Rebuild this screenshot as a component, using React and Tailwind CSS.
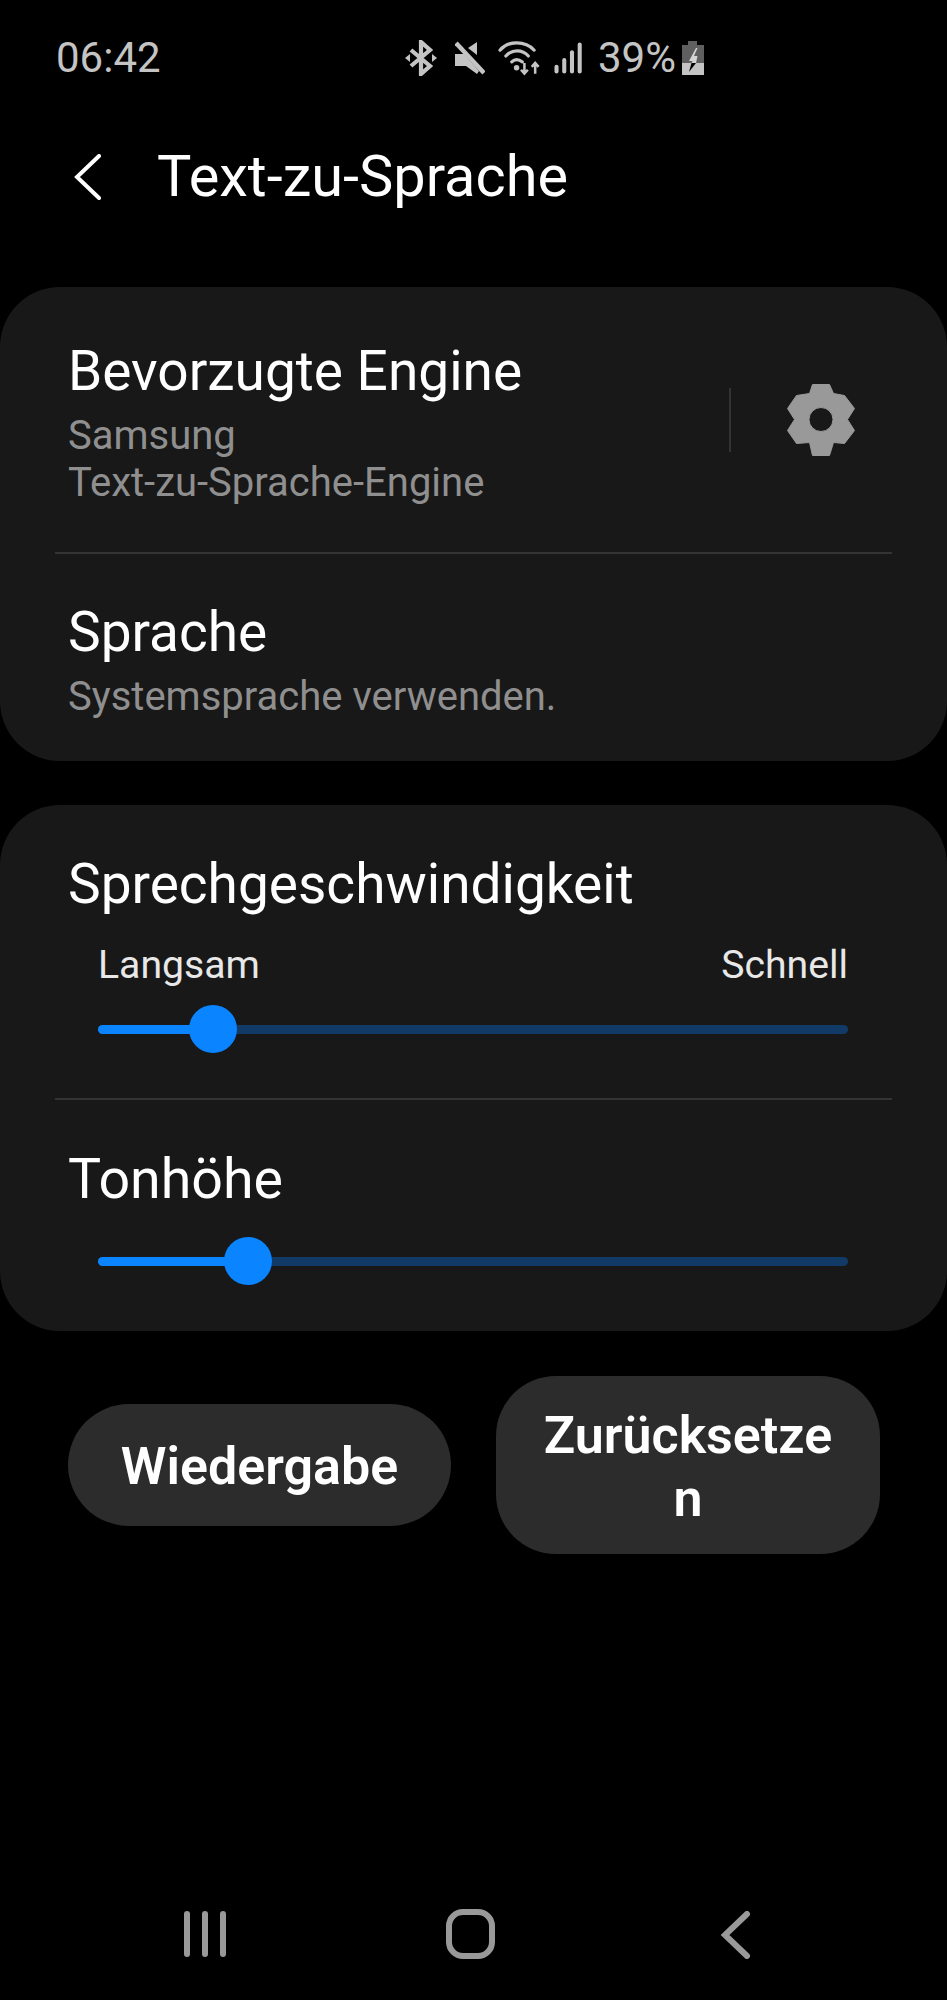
import React from 'react';

const Slider = ({ percent }) => (
  <div className="relative h-[48px] ml-[98px] mr-[99px] flex items-center">
    <div className="w-full h-[9px] rounded-full bg-[#123a66]" />
    <div className="absolute left-0 h-[9px] rounded-full bg-[#0a84ff]" style={{ width: `${percent}%` }} />
    <div
      className="absolute w-[48px] h-[48px] -ml-[24px] rounded-full bg-[#0a84ff]"
      style={{ left: `${percent}%` }}
    />
  </div>
);

const StatusIcons = () => (
  <div className="flex items-center text-[#c4c4c4]">
    {/* bluetooth */}
    <svg width="32" height="36" viewBox="0 0 32 36" fill="none" stroke="currentColor" strokeWidth="4.2">
      <path d="M6 10 L25 26 L16 34 V2 L25 10 L6 26" />
      <path d="M0 18 L5 14 V22 Z M32 18 L27 14 V22 Z" fill="currentColor" stroke="none" />
    </svg>
    {/* mute */}
    <svg className="ml-[18px]" width="30" height="36" viewBox="0 0 30 32" fill="currentColor">
      <path d="M0 12 H9 L24 29 L22 32 L11 24 H0 Z M22 0 V13 L13 6 Z" />
      <path d="M1 1 L29 31" stroke="currentColor" strokeWidth="4.500" />
    </svg>
    {/* wifi */}
    <svg className="ml-[13px]" width="45" height="36" viewBox="0 0 46 36" fill="none" stroke="currentColor" strokeWidth="3.2" strokeLinecap="round">
      <path d="M2 10 C10 0 28 0 37 10" />
      <path d="M8 16 C14 9 25 9 31 16" />
      <path d="M14 22 C17 19 21 19 25 22" />
      <circle cx="19" cy="28" r="2.800" fill="currentColor" stroke="none" />
      <path d="M27 23 V34 M23.5 30 L27 34 L30.5 30 M38 34 V23 M34.500 27 L38 23 L41.500 27" strokeLinecap="butt" strokeWidth="2.6" />
    </svg>
    {/* signal */}
    <svg className="ml-[11px]" width="29" height="36" viewBox="0 0 30 36" fill="currentColor">
      <rect x="0.500" y="25" width="4.200" height="9" rx="2.100" />
      <rect x="8.500" y="18" width="4.200" height="16" rx="2.100" />
      <rect x="16.500" y="10" width="4.200" height="24" rx="2.100" />
      <rect x="24.500" y="2" width="4.200" height="32" rx="2.100" />
    </svg>
    <span className="ml-[15px] text-[42px] leading-none">39%</span>
    {/* battery */}
    <svg className="ml-[5px]" width="24" height="36" viewBox="0 0 24 36">
      <path d="M7 1 H16 V5 H23 V23 H1 V5 H7 Z" fill="#5f5f5f" />
      <rect x="1" y="23" width="22" height="12" fill="#c4c4c4" />
      <path d="M15 8 L8 21 H11.500 L10.500 23 H15 L16.500 16 H13 L16.500 8 Z" fill="#d4d4d4" />
      <path d="M10.500 23 L8 32 L15 23 Z" fill="#000" />
    </svg>
  </div>
);

const App = () => {
  return (
    <div className="w-[947px] h-[2000px] bg-black flex flex-col font-['Roboto',sans-serif]">
      {/* Statusleiste */}
      <div className="h-[116px] pl-[56px] flex items-center shrink-0">
        <span className="text-[42px] leading-none text-[#c4c4c4] w-[349px]">06:42</span>
        <StatusIcons />
      </div>

      {/* Titel */}
      <div className="h-[120px] flex items-center shrink-0 pt-[2px]">
        <svg className="ml-[73px]" width="30" height="46" viewBox="0 0 30 46" fill="none" stroke="#fff" strokeWidth="4" strokeLinecap="round">
          <path d="M26 2 L4 23 L26 44" />
        </svg>
        <h1 className="ml-[54px] text-[57.7px] leading-none text-white">Text-zu-Sprache</h1>
      </div>

      <div className="h-[51px] shrink-0" />

      {/* Engine */}
      <div className="bg-[#181818] rounded-[60px] h-[474px] shrink-0 flex flex-col">
        <div className="h-[267px] flex items-center border-b-2 border-[#343434] mx-[55px]">
          <div className="flex-1 pl-[13px] pt-[8px]">
            <div className="text-[55px] leading-[60px] text-white">Bevorzugte Engine</div>
            <div className="mt-[11px] text-[40px] leading-[47px] text-[#8f8f8f]">Samsung</div>
            <div className="text-[40px] leading-[47px] text-[#8f8f8f]">Text-zu-Sprache-Engine</div>
          </div>
          <div className="w-[2px] h-[64px] bg-[#333333] mr-[56px]" />
          <svg className="mr-[37px]" width="68" height="72" viewBox="-0.500 -0.500 68 72" fill="#999999" stroke="#999999" strokeWidth="1" strokeLinejoin="round">
            <path fillRule="evenodd" d="M25 0 H42 L46 9 L57 11 L67 24 L60 35 L67 46 L57 59 L46 58 L42 71 H25 L22 58 L9 59 L0 46 L7 35 L0 24 L9 11 L22 9 Z M33.500 23 A12 12 0 1 0 33.500 47 A12 12 0 1 0 33.500 23 Z" />
          </svg>
        </div>
        <div className="pl-[68px] pt-[48px]">
          <div className="text-[55px] leading-[60px] text-white">Sprache</div>
          <div className="mt-[11px] text-[40px] leading-[47px] text-[#8f8f8f]">Systemsprache verwenden.</div>
        </div>
      </div>

      <div className="h-[44px] shrink-0" />

      {/* Regler */}
      <div className="bg-[#181818] rounded-[60px] h-[526px] shrink-0 flex flex-col">
        <div className="h-[295px] relative">
          <div className="pl-[68px] pt-[49px] text-[55px] leading-[60px] text-white">Sprechgeschwindigkeit</div>
          <div className="flex justify-between ml-[98px] mr-[99px] mt-[28px] text-[39.200px] leading-[46px] text-[#e8e8e8]">
            <span>Langsam</span>
            <span>Schnell</span>
          </div>
          <div className="mt-[17px]">
            <Slider percent={15.3} />
          </div>
          <div className="absolute bottom-0 left-[55px] right-[55px] h-[2px] bg-[#343434]" />
        </div>
        <div className="pt-[50px]">
          <div className="pl-[68px] text-[55.500px] leading-[60px] text-white">Tonhöhe</div>
          <div className="mt-[27px]">
            <Slider percent={20} />
          </div>
        </div>
      </div>

      {/* Buttons */}
      <div className="flex items-center pl-[68px] mt-[45px] gap-[45px]">
        <button className="w-[383px] h-[122px] pt-[4px] rounded-[61px] bg-[#2c2c2c] text-[52px] font-semibold text-white">Wiedergabe</button>
        <button className="w-[384px] h-[178px] pt-[4px] rounded-[60px] bg-[#2c2c2c] text-[52px] leading-[63px] font-semibold text-white break-all px-[46px]">Zurücksetzen</button>
      </div>

      {/* Navigation */}
      <div className="mt-auto h-[110px] flex items-start shrink-0 pt-[21px]">
        <div className="flex ml-[184px] gap-[12px]">
          <div className="w-[6px] h-[46px] rounded-full bg-[#999999]" />
          <div className="w-[6px] h-[46px] rounded-full bg-[#999999]" />
          <div className="w-[6px] h-[46px] rounded-full bg-[#999999]" />
        </div>
        <div className="ml-[220px] -mt-[2px] w-[49px] h-[50px] rounded-[17px] border-[6px] border-[#999999]" />
        <svg className="ml-[223px]" width="34" height="48" viewBox="0 0 34 48" fill="none" stroke="#999999" strokeWidth="6" strokeLinecap="round" strokeLinejoin="miter">
          <path d="M29 3 L7 24 L29 45" />
        </svg>
      </div>
    </div>
  );
};

export default App;
